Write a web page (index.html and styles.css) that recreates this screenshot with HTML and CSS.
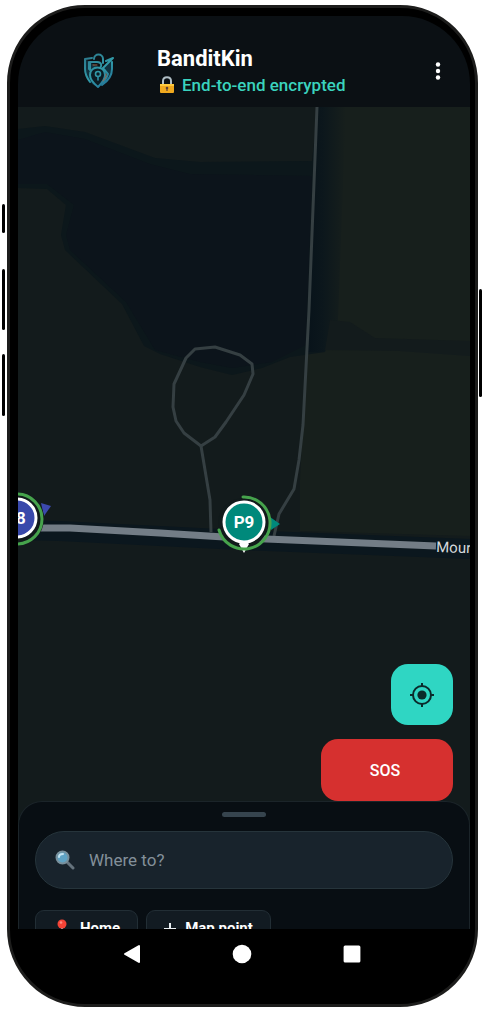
FILE: index.html
```
<!DOCTYPE html>
<html lang="en">
<head>
    <meta charset="UTF-8">
    <meta name="viewport" content="width=device-width, initial-scale=1.0">
    <title>BanditKin</title>
    <link rel="stylesheet" href="styles.css">
</head>
<body>
    <div class="phone">
        <span class="side-key key-mute"></span>
        <span class="side-key key-up"></span>
        <span class="side-key key-down"></span>
        <span class="side-key key-power"></span>

        <div class="screen">
            <header class="topbar">
                <svg class="logo" viewBox="0 0 30 36" fill="none" stroke-linecap="round" stroke-linejoin="round" aria-hidden="true">
                    <defs>
                        <linearGradient id="logo-grad" gradientUnits="userSpaceOnUse" x1="0" y1="0" x2="30" y2="36">
                            <stop offset="0" stop-color="#2b7489"/>
                            <stop offset="0.5" stop-color="#319aa8"/>
                            <stop offset="1" stop-color="#1d6490"/>
                        </linearGradient>
                    </defs>
                    <path d="M1 6 V16 C1 25 6 31 14 34 C22 31 28 25 28 16 V6 L20 14 L26 22 Z" fill="#10323f"/>
                    <g stroke="url(#logo-grad)" stroke-width="2">
                        <path d="M8 5 L1 6 V16 C1 21 3 25 6 29"/>
                        <path d="M5 9 V16"/>
                        <path d="M10 6 C10 0 19 0 19 6 V10"/>
                        <path d="M6 17 V9 H13 C18 9 18 13 16 15"/>
                        <path d="M22 8 L29 5 L19 15 L24 21 C23 25 21 27 19 30"/>
                        <path d="M28 9 V16 C28 23 24 28 18 32"/>
                        <path d="M14 34 C9 30 6 26 6 22 C6 12 21 12 21 22 C21 26 18 30 14 34 Z" fill="#0b1c24"/>
                        <circle cx="14" cy="21" r="2.5" stroke-width="1.6"/>
                        <path d="M14 24 V27" stroke-width="1.6"/>
                    </g>
                    <path d="M9 12 H13 M22 21 L22 24 L19 28" stroke="#a06a4c" stroke-width="1"/>
                </svg>
                <div class="titles">
                    <h1>BanditKin</h1>
                    <p class="status">
                        <svg class="lock" viewBox="0 0 14 18" aria-hidden="true">
                            <path d="M3 9 V5 C3 0 11 0 11 5 V9" fill="none" stroke="#b0bec5" stroke-width="2"/>
                            <rect x="0" y="8" width="14" height="9" rx="1" fill="#f0a91f"/>
                            <path d="M0 8 H14 V10 H0 Z" fill="#ffc93c"/>
                            <circle cx="7" cy="12" r="1.3" fill="#5d4037"/>
                            <path d="M6.4 12 H7.6 V15 H6.4 Z" fill="#5d4037"/>
                        </svg>
                        End-to-end encrypted
                    </p>
                </div>
                <button class="menu" type="button" aria-label="Menu">
                    <svg viewBox="0 0 6 18" aria-hidden="true">
                        <circle cx="3" cy="2.5" r="2.2"/>
                        <circle cx="3" cy="9" r="2.2"/>
                        <circle cx="3" cy="15.5" r="2.2"/>
                    </svg>
                </button>
            </header>

            <main class="stage">
                <!-- map tiles, roads and member pins -->
                <svg class="map" viewBox="18 107 452 822" preserveAspectRatio="xMidYMid slice">
                    <defs>
                        <linearGradient id="strip" x1="0" y1="0" x2="1" y2="0">
                            <stop offset="0" stop-color="#08131a"/>
                            <stop offset="0.4" stop-color="#0c171c"/>
                            <stop offset="1" stop-color="#171f1c"/>
                        </linearGradient>
                    </defs>
                    <path fill="#131b1c" d="M18 107 H470 V929 H18 Z"/>
                    <path fill="#171f1c" d="M320 107 H470 V536 L300 531 V480 Z"/>
                    <path fill="#0c171b" d="M18 129 L45 126 L85 132 L155 158 L200 162 L312 161 L318 107 H333 L325 352 L290 357 L262 368 L232 375 L200 367 L160 354 L144 346 L122 304 L65 250 L61 235 L66 205 L47 189 L18 188 Z"/>
                    <path fill="#0c141b" d="M18 140 L45 132 L85 139 L150 164 L190 174 L312 176 L306 345 L272 362 L232 368 L200 362 L155 350 L126 302 L70 250 L66 235 L74 205 L47 184 L18 184 Z"/>
                    <path fill="url(#strip)" d="M317 107 H346 L338 320 L325 352 H308 Z"/>
                    <path fill="#131b1c" d="M330 320 L350 322 L375 338 L470 341 V356 L400 351 L325 350 Z"/>

                    <path d="M18 530 L60 531 L240 540 L470 549" fill="none" stroke="#0b171e" stroke-width="20"/>
                    <g fill="none" stroke="#353f42" stroke-width="3" stroke-linejoin="round">
                        <path d="M317 107 L309 310 L303 425 L299 460 L294 489 L279 514 L274 536"/>
                        <path d="M201 446 L184 433 L176 421 L173 407 L174 384 L186 358 L195 349 L215 347 L240 355 L252 364 L253 374 L244 395 L226 422 L215 437 Z"/>
                        <path d="M201 446 L210 500 L211 532"/>
                    </g>
                    <path d="M18 528 L70 528 L160 533 L240 538 L436 546" fill="none" stroke="#737d86" stroke-width="7"/>
                    <text class="road-name" x="436" y="552" transform="rotate(2 436 552)">Moun</text>

                    <path d="M41 503 L51 506 L44 516 Z" fill="#3c49ad"/>
                    <circle cx="17" cy="519" r="27" fill="#111a1b"/>
                    <circle cx="17" cy="519" r="25" fill="none" stroke="#46a34c" stroke-width="3"/>
                    <circle cx="17" cy="518" r="19" fill="#3949ab" stroke="#fff" stroke-width="3"/>
                    <text class="pin-text" x="21" y="524">8</text>

                    <path d="M270 517 L280 524 L271 530 Z" fill="#00897b"/>
                    <circle cx="243" cy="523" r="25" fill="#111a1b"/>
                    <path d="M239 544 H249 L244 553 Z" fill="#fff"/>
                    <path d="M243 497 A26 26 0 1 1 219 530" fill="none" stroke="#46a34c" stroke-width="3" stroke-linecap="round"/>
                    <circle cx="244" cy="522" r="20" fill="#00897b" stroke="#fff" stroke-width="3"/>
                    <path d="M238 541 H250 L247 546 H241 Z" fill="#fff"/>
                    <text class="pin-text" x="244" y="528">P9</text>
                </svg>

                <div class="actions">
                    <button class="locate" type="button" aria-label="Centre on my position">
                        <svg viewBox="0 0 24 24" fill="none" stroke="#0b2b2b" stroke-width="2" aria-hidden="true">
                            <circle cx="12" cy="12" r="9"/>
                            <circle cx="12" cy="12" r="4.6" fill="#0b2b2b" stroke="none"/>
                            <path d="M12 0 V3 M12 21 V24 M0 12 H3 M21 12 H24"/>
                        </svg>
                    </button>
                    <button class="sos" type="button">SOS</button>
                </div>

                <section class="sheet">
                    <div class="handle"></div>
                    <label class="search">
                        <svg viewBox="0 0 20 20" aria-hidden="true">
                            <path d="M11 11 L18 18" stroke="#65737d" stroke-width="3" stroke-linecap="round"/>
                            <circle cx="7.5" cy="7.5" r="6" fill="#5fa3c4" stroke="#78909c" stroke-width="2"/>
                            <path d="M4 7 C4 5 6 4 8 4" fill="none" stroke="#c5e4f1" stroke-width="2" stroke-linecap="round"/>
                        </svg>
                        <input type="text" placeholder="Where to?" aria-label="Where to?">
                    </label>
                    <div class="chips">
                        <button class="chip" type="button">
                            <svg class="icon-pin" viewBox="0 0 18 18" aria-hidden="true">
                                <path d="M8 8 H10 V16 L9 18 L8 16 Z" fill="#90a4ae"/>
                                <circle cx="9" cy="5" r="4.5" fill="#f44336"/>
                                <circle cx="8" cy="3.5" r="1.3" fill="#ff8a80"/>
                            </svg>
                            Home
                        </button>
                        <button class="chip" type="button">
                            <svg class="icon-plus" viewBox="0 0 12 18" aria-hidden="true">
                                <path d="M6 4 V16 M0 10 H12" stroke="#e8eef2" stroke-width="2"/>
                            </svg>
                            Map point
                        </button>
                    </div>
                </section>
            </main>

            <nav class="navbar">
                <button type="button" aria-label="Back">
                    <svg viewBox="0 0 20 20"><path d="M3 10 L17 2 V18 Z" stroke="#fff" stroke-width="2" stroke-linejoin="round"/></svg>
                </button>
                <button type="button" aria-label="Home">
                    <svg viewBox="0 0 20 20"><circle cx="10" cy="10" r="9.3"/></svg>
                </button>
                <button type="button" aria-label="Recent apps">
                    <svg viewBox="0 0 20 20"><rect x="1.6" y="1.6" width="16.8" height="16.8" rx="1.5"/></svg>
                </button>
            </nav>
        </div>
    </div>
</body>
</html>
```
FILE: styles.css
```
* {
    box-sizing: border-box;
}
body {
    margin: 0;
    padding: 5px 8px 6px 7px;
    min-height: 100vh;
    display: flex;
    background: #fff;
    font-family: Roboto, sans-serif;
    color: #fff;
}
button {
    border: none;
    padding: 0;
    background: none;
    color: inherit;
    font-family: inherit;
    cursor: pointer;
}
.phone {
    position: relative;
    flex: 1;
    display: flex;
    padding: 8px 5px 8px 8px;
    background: #000;
    border: 3px solid #1d1d1c;
    border-radius: 78px;
}
.side-key {
    position: absolute;
    left: -8px;
    width: 3px;
    border-radius: 2px;
    background: #000;
}
.key-mute {
    top: 196px;
    height: 29px;
}
.key-up {
    top: 261px;
    height: 61px;
}
.key-down {
    top: 346px;
    height: 62px;
}
.key-power {
    left: auto;
    right: -7px;
    top: 281px;
    height: 108px;
}
.screen {
    flex: 1;
    display: flex;
    flex-direction: column;
    overflow: hidden;
    border-radius: 68px;
    background: #000;
}

/* top bar */
.topbar {
    display: flex;
    align-items: center;
    height: 91px;
    padding: 18px 24px 0 66px;
    background: #0b1014;
}
.logo {
    width: 30px;
    height: 36px;
    margin-right: 43px;
}
.titles {
    flex: 1;
}
h1 {
    margin: 0;
    font-size: 22px;
    line-height: 28px;
    font-weight: 700;
}
.status {
    display: flex;
    align-items: center;
    gap: 8px;
    margin: 0;
    padding-left: 3px;
    font-size: 17px;
    line-height: 24px;
    font-weight: 500;
    color: #3ad3be;
}
.lock {
    width: 14px;
    height: 18px;
}
.menu {
    width: 16px;
    height: 18px;
}
.menu svg {
    display: block;
    width: 6px;
    height: 18px;
    margin: 0 auto;
    fill: #fff;
}

/* map */
.stage {
    position: relative;
    flex: 1;
    display: flex;
    flex-direction: column;
    justify-content: flex-end;
    overflow: hidden;
    background: #131b1c;
}
.map {
    position: absolute;
    inset: 0;
    width: 100%;
    height: 100%;
}
.road-name {
    font-size: 15px;
    fill: #d5d9dc;
}
.pin-text {
    font-size: 17px;
    font-weight: 700;
    fill: #fff;
    text-anchor: middle;
}
.actions {
    position: relative;
    display: flex;
    flex-direction: column;
    align-items: flex-end;
    gap: 14px;
    padding-right: 17px;
}
.locate {
    display: flex;
    align-items: center;
    justify-content: center;
    width: 62px;
    height: 61px;
    border-radius: 17px;
    background: #2fd6c3;
}
.locate svg {
    width: 24px;
    height: 24px;
}
.sos {
    width: 132px;
    height: 62px;
    padding-right: 4px;
    border-radius: 17px;
    background: #d6302f;
    font-size: 16px;
    font-weight: 500;
}

/* bottom sheet */
.sheet {
    position: relative;
    height: 128px;
    padding: 10px 16px 0;
    overflow: hidden;
    background: #080e13;
    border: 1px solid #1b2429;
    border-bottom: none;
    border-radius: 24px 24px 0 0;
}
.handle {
    width: 44px;
    height: 5px;
    margin: 0 auto 14px;
    border-radius: 3px;
    background: #36444e;
}
.search {
    display: flex;
    align-items: center;
    gap: 14px;
    height: 58px;
    padding: 0 19px;
    background: #18232c;
    border: 1px solid #26343b;
    border-radius: 29px;
}
.search svg {
    width: 20px;
    height: 20px;
}
.search input {
    flex: 1;
    min-width: 0;
    padding: 0;
    border: none;
    outline: none;
    background: none;
    color: #fff;
    font-family: inherit;
    font-size: 17px;
}
.search input::placeholder {
    color: #83909a;
    opacity: 1;
}
.chips {
    display: flex;
    gap: 8px;
    margin-top: 21px;
}
.chip {
    display: flex;
    align-items: center;
    gap: 9px;
    height: 36px;
    padding: 0 17px;
    background: #121b22;
    border: 1px solid #222e35;
    border-radius: 9px;
    font-size: 15px;
    font-weight: 700;
}
.icon-pin {
    width: 18px;
    height: 18px;
}
.icon-plus {
    width: 12px;
    height: 18px;
}

/* system navigation */
.navbar {
    display: flex;
    align-items: center;
    justify-content: center;
    gap: 90px;
    height: 67px;
    padding: 0 4px 17px 0;
    background: #000;
}
.navbar button {
    width: 20px;
    height: 20px;
}
.navbar svg {
    display: block;
    width: 20px;
    height: 20px;
    fill: #fff;
}
```
